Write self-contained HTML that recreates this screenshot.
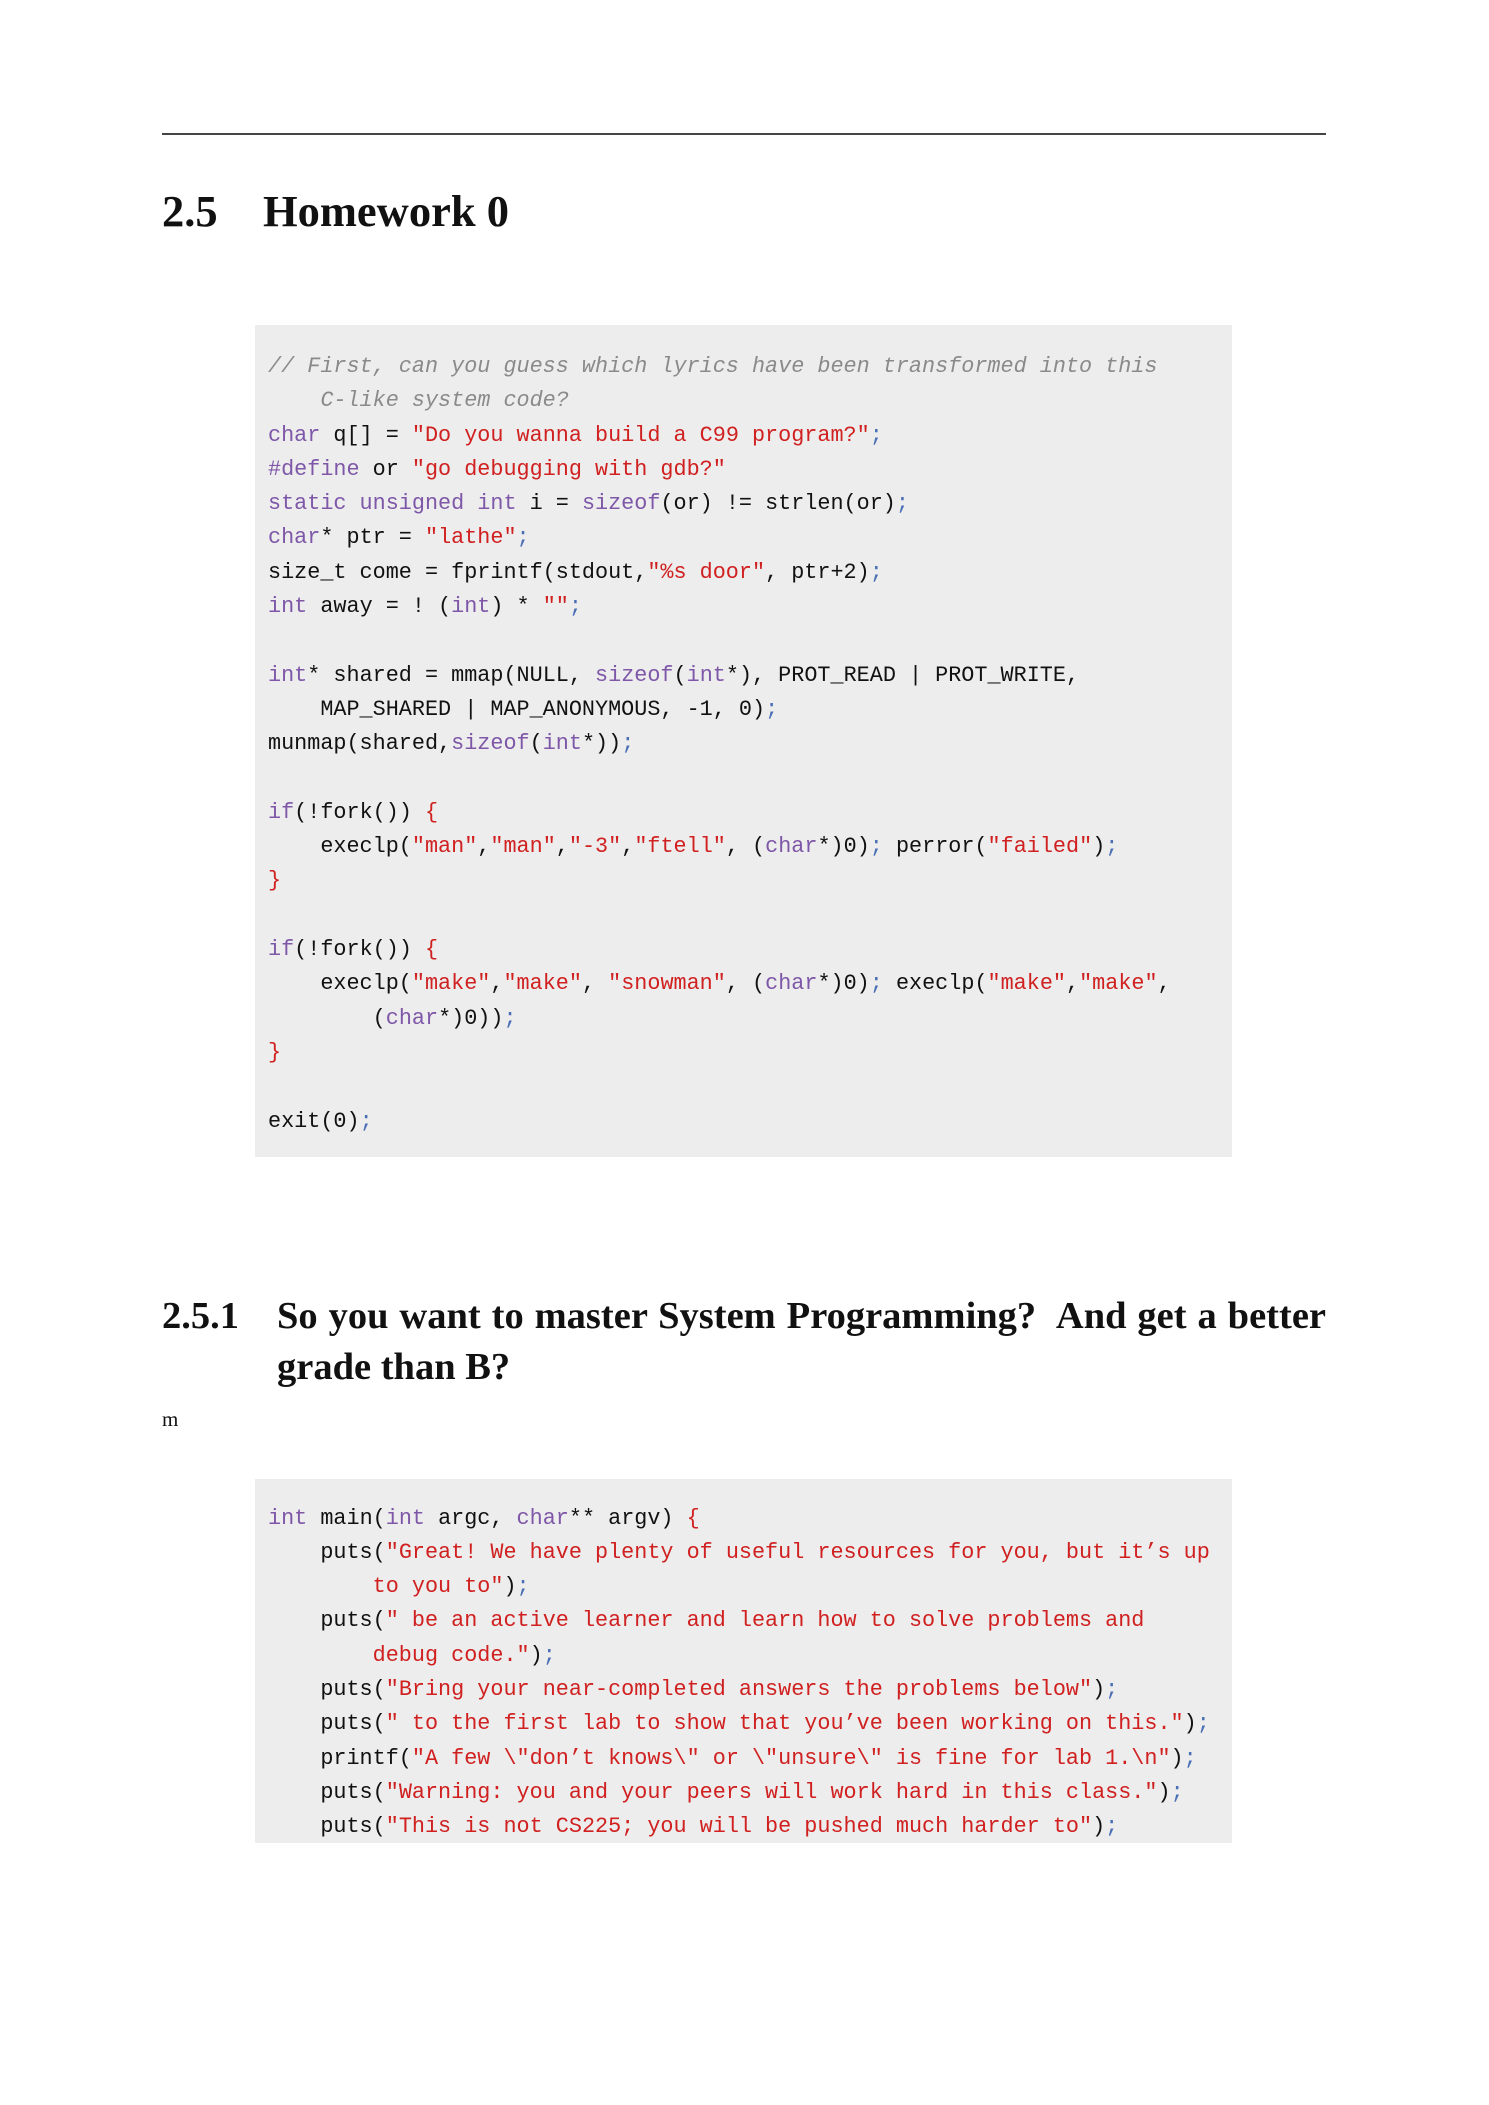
<!DOCTYPE html>
<html><head><meta charset="utf-8"><style>
html,body{margin:0;padding:0;background:#fff;width:1489px;height:2105px;overflow:hidden;position:relative}
.abs{position:absolute}
.hr{left:162px;top:133px;width:1164px;height:2px;background:#444}
.h{font-family:"Liberation Serif",serif;font-weight:bold;color:#111;white-space:nowrap}
pre{margin:0;font-family:"Liberation Mono",monospace;font-size:21.8px;line-height:34.29px;color:#111}
.box{background:#ededed;left:255px;width:977px}
.k{color:#7e57a8}.s{color:#d02020}.c{color:#8a8a8a;font-style:italic}.p{color:#4a6fb5}
</style></head><body>
<div class="abs hr"></div>
<div class="abs h" style="left:162px;top:181px;font-size:44.5px;line-height:60px">2.5</div>
<div class="abs h" style="left:263px;top:181px;font-size:44.5px;line-height:60px">Homework 0</div>

<div class="abs box" style="top:325px;height:832px">
<pre style="padding:25px 0 0 13px"><span class="c">// First, can you guess which lyrics have been transformed into this
    C-like system code?</span>
<span class="k">char</span> q[] = <span class="s">"Do you wanna build a C99 program?"</span><span class="p">;</span>
<span class="k">#define</span> or <span class="s">"go debugging with gdb?"</span>
<span class="k">static unsigned int</span> i = <span class="k">sizeof</span>(or) != strlen(or)<span class="p">;</span>
<span class="k">char</span>* ptr = <span class="s">"lathe"</span><span class="p">;</span>
size_t come = fprintf(stdout,<span class="s">"%s door"</span>, ptr+2)<span class="p">;</span>
<span class="k">int</span> away = ! (<span class="k">int</span>) * <span class="s">""</span><span class="p">;</span>

<span class="k">int</span>* shared = mmap(NULL, <span class="k">sizeof</span>(<span class="k">int</span>*), PROT_READ | PROT_WRITE,
    MAP_SHARED | MAP_ANONYMOUS, -1, 0)<span class="p">;</span>
munmap(shared,<span class="k">sizeof</span>(<span class="k">int</span>*))<span class="p">;</span>

<span class="k">if</span>(!fork()) <span class="s">{</span>
    execlp(<span class="s">"man"</span>,<span class="s">"man"</span>,<span class="s">"-3"</span>,<span class="s">"ftell"</span>, (<span class="k">char</span>*)0)<span class="p">;</span> perror(<span class="s">"failed"</span>)<span class="p">;</span>
<span class="s">}</span>

<span class="k">if</span>(!fork()) <span class="s">{</span>
    execlp(<span class="s">"make"</span>,<span class="s">"make"</span>, <span class="s">"snowman"</span>, (<span class="k">char</span>*)0)<span class="p">;</span> execlp(<span class="s">"make"</span>,<span class="s">"make"</span>,
        (<span class="k">char</span>*)0))<span class="p">;</span>
<span class="s">}</span>

exit(0)<span class="p">;</span></pre>
</div>

<div class="abs h" style="left:162px;top:1291px;font-size:38.5px;line-height:51px">2.5.1</div>
<div class="abs h" style="left:277px;top:1291px;width:1049px;font-size:38.5px;line-height:51px;white-space:normal;text-align:justify">So you want to master System Programming?&nbsp; And get a better grade than B?</div>
<div class="abs" style="left:162px;top:1407px;font-family:'Liberation Serif',serif;font-size:21px;color:#111">m</div>

<div class="abs box" style="top:1479px;height:364px">
<pre style="padding:22.6px 0 0 13px"><span class="k">int</span> main(<span class="k">int</span> argc, <span class="k">char</span>** argv) <span class="s">{</span>
    puts(<span class="s">"Great! We have plenty of useful resources for you, but it’s up
        to you to"</span>)<span class="p">;</span>
    puts(<span class="s">" be an active learner and learn how to solve problems and
        debug code."</span>)<span class="p">;</span>
    puts(<span class="s">"Bring your near-completed answers the problems below"</span>)<span class="p">;</span>
    puts(<span class="s">" to the first lab to show that you’ve been working on this."</span>)<span class="p">;</span>
    printf(<span class="s">"A few \"don’t knows\" or \"unsure\" is fine for lab 1.\n"</span>)<span class="p">;</span>
    puts(<span class="s">"Warning: you and your peers will work hard in this class."</span>)<span class="p">;</span>
    puts(<span class="s">"This is not CS225; you will be pushed much harder to"</span>)<span class="p">;</span></pre>
</div>
</body></html>
